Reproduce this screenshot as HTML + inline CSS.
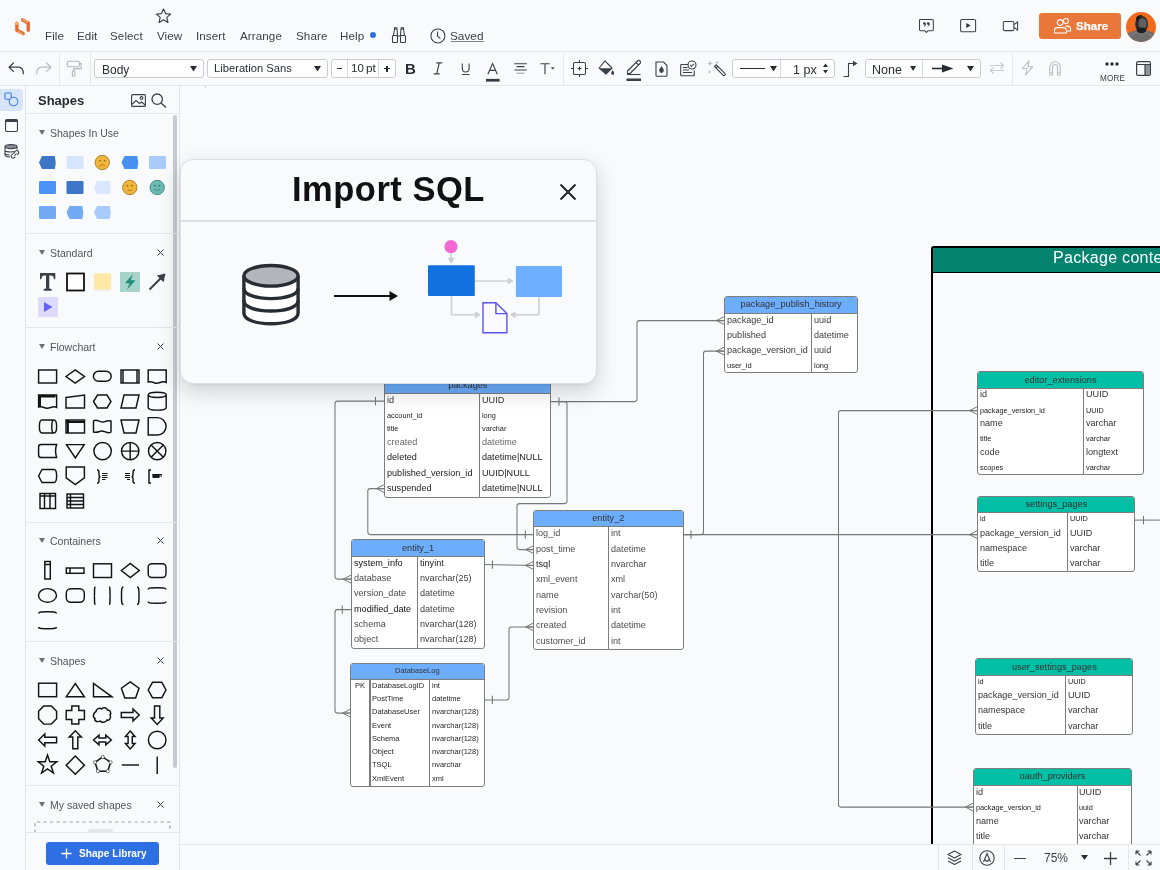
<!DOCTYPE html><html><head><meta charset="utf-8"><style>
*{box-sizing:border-box;margin:0;padding:0}
html,body{width:1160px;height:870px;overflow:hidden;background:#f9fafc;-webkit-font-smoothing:antialiased;font-family:"Liberation Sans",sans-serif;color:#282c33}
.abs{position:absolute}
.t{position:absolute;white-space:nowrap;line-height:1;will-change:transform}
svg{position:absolute;overflow:visible}
</style></head><body>

<div class="abs" style="left:0;top:0;width:1160px;height:51px;background:#f9fafc"></div>
<div class="abs" style="left:0;top:51px;width:1160px;height:1px;background:#e3e6ea"></div>
<div class="abs" style="left:0;top:85px;width:1160px;height:1px;background:#e3e6ea"></div>
<svg style="left:12px;top:16px" width="22" height="22" viewBox="0 0 22 22" fill="none" stroke-linecap="round" stroke-linejoin="round">
<path d="M4.9 7.3 V14.2 L11.2 17.6" stroke="#e4692a" stroke-width="3.4"/>
<path d="M4.9 7.2 V7.5" stroke="#f7b06a" stroke-width="3"/><path d="M6.5 15.6 L10.8 17.9" stroke="#f6a45c" stroke-width="1.6"/>
<path d="M10.6 3.9 L16.2 6.9 V14.2" stroke="#e4692a" stroke-width="3.4"/>
<path d="M10.9 3.6 L15.6 6.2" stroke="#f6a45c" stroke-width="1.6"/>
</svg>
<svg style="left:155px;top:8px" width="17" height="16" viewBox="0 0 17 16"><path d="M8.5 1 L10.6 5.6 L15.6 6.1 L11.8 9.4 L12.9 14.4 L8.5 11.8 L4.1 14.4 L5.2 9.4 L1.4 6.1 L6.4 5.6 Z" fill="none" stroke="#3b4048" stroke-width="1.2" stroke-linejoin="round"/></svg>
<div class="t" style="left:45.3px;top:29.7px;font-size:11.6px;letter-spacing:0.1px;color:#3a3f47">File</div>
<div class="t" style="left:76.8px;top:29.7px;font-size:11.6px;letter-spacing:0.1px;color:#3a3f47">Edit</div>
<div class="t" style="left:110.3px;top:29.7px;font-size:11.6px;letter-spacing:0.1px;color:#3a3f47">Select</div>
<div class="t" style="left:157.3px;top:29.7px;font-size:11.6px;letter-spacing:0.1px;color:#3a3f47">View</div>
<div class="t" style="left:196.3px;top:29.7px;font-size:11.6px;letter-spacing:0.1px;color:#3a3f47">Insert</div>
<div class="t" style="left:240.3px;top:29.7px;font-size:11.6px;letter-spacing:0.1px;color:#3a3f47">Arrange</div>
<div class="t" style="left:296.1px;top:29.7px;font-size:11.6px;letter-spacing:0.1px;color:#3a3f47">Share</div>
<div class="t" style="left:340.3px;top:29.7px;font-size:11.6px;letter-spacing:0.1px;color:#3a3f47">Help</div>
<div class="abs" style="left:370px;top:32px;width:6px;height:6px;border-radius:50%;background:#2f6fe4"></div>
<svg style="left:391px;top:27px" width="16" height="17" viewBox="0 0 16 17" fill="none" stroke="#3b4048" stroke-width="1.1">
<rect x="1.5" y="8.5" width="5" height="7" rx="0.8"/><rect x="9.5" y="8.5" width="5" height="7" rx="0.8"/>
<path d="M2.5 8.5 L3.5 2 L6 2 L6.5 8.5 M13.5 8.5 L12.5 2 L10 2 L9.5 8.5 M6.5 9 L9.5 9 M3.5 2 L3.5 0.8 L5.8 0.8 L5.8 2 M10.2 2 L10.2 0.8 L12.5 0.8 L12.5 2"/></svg>
<svg style="left:430px;top:28px" width="16" height="16" viewBox="0 0 16 16" fill="none" stroke="#3b4048" stroke-width="1.05"><circle cx="7.9" cy="7.9" r="7"/><path d="M7.6 3.6 L7.6 8.2 L10.4 10.6"/></svg>
<div class="t" style="left:450.3px;top:30.8px;font-size:11.8px;color:#3a3f47">Saved</div><div class="abs" style="left:450.8px;top:40.5px;width:33px;height:1px;background:#7d828a"></div>
<svg style="left:918px;top:18px" width="17" height="17" viewBox="0 0 17 17" fill="none" stroke="#3b4048" stroke-width="1.05">
<path d="M2.6 1.4 H14.2 A1.1 1.1 0 0 1 15.3 2.5 V11.6 A1.1 1.1 0 0 1 14.2 12.7 H10 L8.4 14.5 L6.8 12.7 H2.6 A1.1 1.1 0 0 1 1.5 11.6 V2.5 A1.1 1.1 0 0 1 2.6 1.4 Z" stroke-linejoin="round"/>
<g fill="#2a2e35" stroke="none"><circle cx="6.4" cy="5.6" r="1.25"/><circle cx="10.2" cy="5.6" r="1.25"/></g>
<path d="M7.5 5.8 C7.5 7.2 6.9 8 6 8.4 M11.3 5.8 C11.3 7.2 10.7 8 9.8 8.4" stroke="#2a2e35" stroke-width="1"/></svg>
<svg style="left:959px;top:18px" width="18" height="15" viewBox="0 0 18 15" fill="none" stroke="#3b4048" stroke-width="1.05">
<rect x="1.6" y="1.4" width="15" height="12.4" rx="1.4"/><path d="M7.3 5.1 L11.6 7.6 L7.3 10.1 Z" fill="#2a2e35" stroke="none"/></svg>
<svg style="left:1002px;top:20px" width="17" height="12" viewBox="0 0 17 12" fill="none" stroke="#3b4048" stroke-width="1.05">
<rect x="1.3" y="1.4" width="10.6" height="9.2" rx="1.3"/><path d="M11.9 4.6 L15.6 2 V10 L11.9 7.4"/></svg>
<div class="abs" style="left:1039px;top:13px;width:82px;height:26px;border-radius:3px;background:#e9773a"></div>
<svg style="left:1053px;top:17px" width="19" height="17" viewBox="0 0 19 17" fill="#e9773a" stroke="#fff" stroke-width="1.05">
<circle cx="12.9" cy="3.9" r="2.5"/><path d="M12.5 9.1 H14 C16.2 9.1 17.6 10.5 17.6 12.3 V14 H13.5"/>
<circle cx="7.2" cy="5.5" r="2.9"/><path d="M1.5 16 V13.3 C1.5 11.6 2.9 10.6 4.5 10.6 H10 C11.8 10.6 13.3 11.6 13.3 13.3 V16 Z"/></svg>
<div class="t" style="left:1075.5px;top:20.3px;font-size:11.6px;font-weight:bold;color:#fff;-webkit-text-stroke:0.25px #fff">Share</div>
<svg style="left:1126px;top:12px" width="30" height="30" viewBox="0 0 30 30">
<defs><clipPath id="avc"><circle cx="15" cy="15" r="15"/></clipPath></defs>
<g clip-path="url(#avc)"><rect width="30" height="30" fill="#f06b1c"/>
<path d="M0 23 C4 19.5 8 18.8 11 18 L19 18 C22 18.8 26 19.5 30 23 V30 H0 Z" fill="#6d6d6d"/>
<path d="M3 24 C6 22 9 21 12 20.5 M18 20.5 C21 21 24 22 27 24" stroke="#8a8a8a" stroke-width="0.8" fill="none"/>
<ellipse cx="15.6" cy="12.3" rx="6.4" ry="8.4" fill="#2a2a2a"/>
<ellipse cx="16.6" cy="11.6" rx="4.2" ry="5.6" fill="#8a8a8a" opacity="0.55"/>
<ellipse cx="15.4" cy="18.2" rx="4.6" ry="2.8" fill="#1e1e1e"/>
<path d="M10 6.5 C11 3.5 14.5 2.8 16.5 3.2 C13.5 4.2 11.8 6.2 11.2 9.5 Z" fill="#111"/>
</g></svg>
<svg style="left:8px;top:62px" width="17" height="13" viewBox="0 0 17 13" fill="none" stroke="#3b4048" stroke-width="1.2" stroke-linecap="round" stroke-linejoin="round">
<path d="M5.5 1 L1 5.2 L5.5 9.4 M1.2 5.2 H10.5 C13.5 5.2 15.3 7.5 15.3 11.8"/></svg>
<svg style="left:35px;top:62px" width="17" height="13" viewBox="0 0 17 13" fill="none" stroke="#b9bdc4" stroke-width="1.2" stroke-linecap="round" stroke-linejoin="round">
<path d="M11.5 1 L16 5.2 L11.5 9.4 M15.8 5.2 H6.5 C3.5 5.2 1.7 7.5 1.7 11.8"/></svg>
<div class="abs" style="left:59px;top:52px;width:1px;height:33px;background:#e6e8eb"></div>
<div class="abs" style="left:90px;top:52px;width:1px;height:33px;background:#e6e8eb"></div>
<svg style="left:66px;top:60px" width="17" height="17" viewBox="0 0 17 17" fill="none" stroke="#b3b7be" stroke-width="1.1">
<rect x="1.3" y="1.2" width="12.2" height="5.6" rx="1.6"/><path d="M13.5 3.6 H15.2 V8.6 H7.7 V10.6"/><rect x="6.4" y="10.6" width="2.6" height="5.6" rx="1.3"/></svg>
<div class="abs" style="left:94px;top:59px;width:110px;height:19px;border:1px solid #c9cdd3;border-radius:3px;background:#fff;"></div>
<div class="t" style="left:101.5px;top:63.6px;font-size:12px;color:#282c33">Body</div>
<svg style="left:190px;top:66px" width="7" height="5.5" viewBox="0 0 7 5.5"><path d="M0 0 H7 L3.5 5.5 Z" fill="#282c33"/></svg>
<div class="abs" style="left:207px;top:59px;width:121px;height:19px;border:1px solid #c9cdd3;border-radius:3px;background:#fff;"></div>
<div class="t" style="left:214px;top:62.8px;font-size:11.2px;color:#282c33">Liberation Sans</div>
<svg style="left:314px;top:66px" width="7" height="5.5" viewBox="0 0 7 5.5"><path d="M0 0 H7 L3.5 5.5 Z" fill="#282c33"/></svg>
<div class="abs" style="left:331px;top:59px;width:65px;height:19px;border:1px solid #c9cdd3;border-radius:3px;background:#fff;"></div>
<div class="abs" style="left:347px;top:60px;width:1px;height:17px;background:#d5d8dd"></div>
<div class="abs" style="left:377.8px;top:60px;width:1px;height:17px;background:#d5d8dd"></div>
<div class="abs" style="left:336.8px;top:68.2px;width:5.6px;height:1.3px;background:#282c33"></div>
<div class="t" style="left:350.5px;top:62.8px;font-size:11.5px;color:#282c33">10</div><div class="t" style="left:365.6px;top:62.8px;font-size:11.8px;color:#282c33">pt</div>
<div class="abs" style="left:384px;top:68.1px;width:6px;height:1.4px;background:#282c33"></div><div class="abs" style="left:386.3px;top:65.8px;width:1.4px;height:6px;background:#282c33"></div>
<div class="t" style="left:404.5px;top:61px;font-size:15px;font-weight:bold;color:#282c33">B</div>
<svg style="left:433px;top:62.2px" width="10" height="13" viewBox="0 0 10 13" fill="none" stroke="#3b4048" stroke-width="1.15"><path d="M3.3 0.8 H9.3 M0.7 11.8 H6.7 M6.3 0.8 L3.7 11.8"/></svg>
<svg style="left:461px;top:62.6px" width="10" height="13" viewBox="0 0 10 13" fill="none" stroke="#3b4048" stroke-width="1.1"><path d="M1.3 0.5 V5.6 C1.3 7.9 2.8 9 4.7 9 C6.6 9 8.1 7.9 8.1 5.6 V0.5 M0.9 11.5 H8.6"/></svg>
<svg style="left:486px;top:62.6px" width="15" height="19" viewBox="0 0 15 19"><path d="M1.9 11.2 L6.6 0.6 L11.3 11.2 M3.6 7.4 H9.6" fill="none" stroke="#3b4048" stroke-width="1.15"/><rect x="0" y="15.9" width="13.6" height="2.7" fill="#353a42"/></svg>
<svg style="left:514px;top:62.5px" width="14" height="12" viewBox="0 0 14 12" stroke="#3b4048" stroke-width="1.05"><path d="M0.3 0.7 H12.8 M2.6 3.6 H10.5 M0.3 6.9 H12.8"/><path d="M2.6 10.2 H10.5" stroke="#9a9ea5"/></svg>
<svg style="left:540px;top:62.5px" width="16" height="13" viewBox="0 0 16 13"><path d="M0.4 0.7 H9.6 M5 0.7 V11.3" fill="none" stroke="#3b4048" stroke-width="1.15"/><path d="M10.8 4.3 H14.6 L12.7 6.6 Z" fill="#3b4048"/></svg>
<div class="abs" style="left:563px;top:52px;width:1px;height:33px;background:#e6e8eb"></div>
<svg style="left:571px;top:60px" width="17" height="17" viewBox="0 0 17 17" fill="none" stroke="#3b4048" stroke-width="1.1">
<rect x="2.5" y="2.5" width="12" height="12" rx="1.2"/><path d="M8.5 0 V3 M8.5 14 V17 M0 8.5 H3 M14 8.5 H17 M8.5 6.5 V10.5 M6.5 8.5 H10.5"/></svg>
<svg style="left:598px;top:60px" width="17" height="21" viewBox="0 0 17 21">
<path d="M7 0.8 L9 3 L14 8 L8 14.2 L1.2 8 Z" fill="none" stroke="#3b4048" stroke-width="1.1" stroke-linejoin="round"/>
<path d="M1.5 8.2 H14 L8 14.2 Z" fill="#3b4048"/><path d="M14.6 10 C15.6 11.6 16.2 12.6 16.2 13.3 A1.5 1.5 0 0 1 13.2 13.3 C13.2 12.6 13.7 11.6 14.6 10Z" fill="#3b4048"/>
<rect x="0" y="18" width="15" height="3" fill="#ffffff"/></svg>
<svg style="left:626px;top:60px" width="16" height="22" viewBox="0 0 16 22" fill="none" stroke="#3b4048" stroke-width="1.1" stroke-linejoin="round">
<path d="M1.5 13.5 L1.5 11 L11.5 1 A1.6 1.6 0 0 1 14 3.5 L4 13.5 Z M10 2.5 L12.5 5"/><path d="M1 14.5 H14.5"/><rect x="0.5" y="18.5" width="14.5" height="2.5" fill="#3b4048" stroke="none"/></svg>
<svg style="left:655px;top:61px" width="13" height="16" viewBox="0 0 13 16" fill="none" stroke="#3b4048" stroke-width="1.1">
<path d="M1 1 H8.5 L12 4.5 V14.5 A0.8 0.8 0 0 1 11.2 15.2 H1.8 A0.8 0.8 0 0 1 1 14.5 Z"/><path d="M6.5 5 C7.8 7 8.8 8.3 8.8 9.6 A2.3 2.3 0 0 1 4.2 9.6 C4.2 8.3 5.2 7 6.5 5Z" fill="#3b4048" stroke="none"/></svg>
<svg style="left:680px;top:60px" width="17" height="17" viewBox="0 0 17 17" fill="none" stroke="#3b4048" stroke-width="1.1">
<path d="M8 4.5 H1.5 A0.8 0.8 0 0 0 0.7 5.3 V15 A0.8 0.8 0 0 0 1.5 15.8 H13.5 A0.8 0.8 0 0 0 14.3 15 V10.5"/><circle cx="12" cy="5" r="4"/><path d="M10.2 5 L11.5 6.3 L13.9 3.8"/><path d="M3 10 H9 M3 12.5 H12 M3 7.5 H7.5"/></svg>
<svg style="left:706px;top:60px" width="20" height="18" viewBox="0 0 20 18">
<path d="M8.5 6.5 L10.3 4.8 L18.8 13.3 A1.2 1.2 0 0 1 17 15.1 Z M10 8 L11.8 6.3" fill="none" stroke="#3b4048" stroke-width="1.1"/>
<path d="M4 0.5 L4.8 2.7 L7 3.5 L4.8 4.3 L4 6.5 L3.2 4.3 L1 3.5 L3.2 2.7Z" fill="#b9bdc4"/><path d="M11 0.5 L11.6 2 L13 2.5 L11.6 3 L11 4.5 L10.4 3 L9 2.5 L10.4 2Z" fill="#b9bdc4"/><path d="M3.5 10 L4.1 11.5 L5.5 12 L4.1 12.5 L3.5 14 L2.9 12.5 L1.5 12 L2.9 11.5Z" fill="#b9bdc4"/></svg>
<div class="abs" style="left:732px;top:59px;width:103px;height:19px;border:1px solid #c9cdd3;border-radius:3px;background:#fff;"></div>
<div class="abs" style="left:739.5px;top:68px;width:25px;height:1.2px;background:#282c33"></div>
<svg style="left:769.5px;top:66px" width="7" height="5.5" viewBox="0 0 7 5.5"><path d="M0 0 H7 L3.5 5.5 Z" fill="#282c33"/></svg>
<div class="abs" style="left:779.5px;top:60px;width:1px;height:17px;background:#d5d8dd"></div>
<div class="t" style="left:793px;top:63.6px;font-size:12.5px;color:#282c33">1 px</div>
<svg style="left:822.6px;top:63px" width="5" height="11" viewBox="0 0 5 11"><path d="M0 4 L2.5 0.6 L5 4Z M0 7 L2.5 10.4 L5 7Z" fill="#282c33"/></svg>
<svg style="left:843px;top:60px" width="15" height="18" viewBox="0 0 15 18" fill="none" stroke="#3b4048" stroke-width="1.1"><path d="M0.5 16.5 H5.5 V3.5 H10"/><path d="M10 0.8 L14.5 3.5 L10 6.2Z" fill="#3b4048" stroke="none"/></svg>
<div class="abs" style="left:865px;top:59px;width:116px;height:19px;border:1px solid #c9cdd3;border-radius:3px;background:#fff;"></div>
<div class="t" style="left:871.8px;top:63.6px;font-size:12.5px;color:#282c33">None</div>
<svg style="left:909.6px;top:66.2px" width="6.2" height="5" viewBox="0 0 6.2 5"><path d="M0 0 H6.2 L3.1 5 Z" fill="#282c33"/></svg>
<div class="abs" style="left:922px;top:60px;width:1px;height:17px;background:#d5d8dd"></div>
<svg style="left:932px;top:64px" width="22" height="9" viewBox="0 0 22 9"><path d="M0 4.5 H12" stroke="#282c33" stroke-width="1.6"/><path d="M10 0.5 L21.5 4.5 L10 8.5 Z" fill="#282c33"/></svg>
<svg style="left:966.5px;top:66px" width="7" height="5.5" viewBox="0 0 7 5.5"><path d="M0 0 H7 L3.5 5.5 Z" fill="#282c33"/></svg>
<svg style="left:989px;top:62px" width="16" height="12" viewBox="0 0 16 12" fill="none" stroke="#c5c9cf" stroke-width="1.1"><path d="M1 3.5 H14.5 M11.5 0.5 L14.5 3.5 L11.5 6.5 M15 8.5 H1.5 M4.5 5.5 L1.5 8.5 L4.5 11.5"/></svg>
<div class="abs" style="left:1012px;top:52px;width:1px;height:33px;background:#e6e8eb"></div>
<svg style="left:1021px;top:60px" width="13" height="16" viewBox="0 0 13 16" fill="none" stroke="#b9bdc4" stroke-width="1.1" stroke-linejoin="round"><path d="M8 0.8 L1.2 8.5 H6 L4.5 15.2 L11.8 6.8 H7 Z"/></svg>
<svg style="left:1049px;top:61px" width="12" height="15" viewBox="0 0 12 15" fill="none" stroke="#b9bdc4" stroke-width="1.1"><path d="M0.8 14 V6 A5.2 5.2 0 0 1 11.2 6 V14 H8.5 V6 A2.5 2.5 0 0 0 3.5 6 V14 Z M0.8 11.8 H3.5 M8.5 11.8 H11.2"/></svg>
<svg style="left:1105px;top:62px" width="14" height="4" viewBox="0 0 14 4"><circle cx="2" cy="2" r="1.7" fill="#282c33"/><circle cx="7" cy="2" r="1.7" fill="#282c33"/><circle cx="12" cy="2" r="1.7" fill="#282c33"/></svg>
<div class="t" style="left:1100px;top:74.5px;font-size:8.2px;color:#3a3f47;letter-spacing:0.15px">MORE</div>
<svg style="left:1136px;top:61px" width="15" height="15" viewBox="0 0 15 15"><rect x="0.6" y="0.6" width="13.8" height="13.8" rx="1.5" fill="none" stroke="#3b4048" stroke-width="1.2"/><rect x="9" y="3.5" width="5" height="10.5" fill="#8f949b"/><path d="M0.6 3.5 H14.4 M9 3.5 V14.4" stroke="#3b4048" stroke-width="1.2"/></svg>
<div class="abs" style="left:25px;top:86px;width:1px;height:784px;background:#e3e6ea"></div>
<div class="abs" style="left:0;top:88.5px;width:23px;height:22.5px;border-radius:0 4px 4px 0;background:#d7e5fb"></div>
<svg style="left:4px;top:92px" width="15" height="15" viewBox="0 0 15 15" fill="none" stroke="#3f7de6" stroke-width="1.1"><path d="M7.2 5.2 V1.8 A0.8 0.8 0 0 0 6.4 1 H1.8 A0.8 0.8 0 0 0 1 1.8 V6.4 A0.8 0.8 0 0 0 1.8 7.2 H5.2"/><circle cx="9.5" cy="9.5" r="4.3"/></svg>
<svg style="left:5px;top:119px" width="13" height="13" viewBox="0 0 13 13"><rect x="0.55" y="0.55" width="11.9" height="11.9" rx="1.2" fill="none" stroke="#3b4048" stroke-width="1.1"/><path d="M0.55 1.8 A1.2 1.2 0 0 1 1.75 0.55 H11.25 A1.2 1.2 0 0 1 12.45 1.8 V3 H0.55 Z" fill="#3b4048"/></svg>
<svg style="left:4px;top:144px" width="16" height="15" viewBox="0 0 16 15" fill="none" stroke="#3b4048" stroke-width="1.1">
<ellipse cx="7" cy="2.6" rx="6" ry="2" fill="#8e9299"/><path d="M1 2.6 V11 C1 12 3 12.8 6 13 M13 2.6 V5.5 M1 6 C1 7.1 3.7 8 7 8 C8.3 8 9.4 7.9 10.3 7.6 M1 9 C1 10 2.8 10.8 5.6 11"/>
<path d="M9.6 9.2 L11.6 7.2 A1.8 1.8 0 0 1 14.2 9.8 L13.2 10.8 M11.4 12.6 L10.4 13.6 A1.8 1.8 0 0 1 7.8 11 L9.8 9 M10.3 11.7 L12.5 9.5" stroke-width="1.05"/></svg>
<div class="abs" style="left:179px;top:86px;width:1px;height:784px;background:#e3e6ea"></div>
<div class="t" style="left:38px;top:93.5px;font-size:13px;font-weight:bold;color:#282c33">Shapes</div>
<svg style="left:131px;top:94px" width="15" height="13" viewBox="0 0 15 13" fill="none" stroke="#3b4048" stroke-width="1.1"><rect x="0.6" y="0.6" width="13.8" height="11.8" rx="1"/><path d="M0.8 10.5 L5 6.5 L8.5 9.5 L10.5 8 L14.2 11"/><circle cx="10.5" cy="4" r="1.4"/></svg>
<svg style="left:151px;top:93px" width="16" height="15" viewBox="0 0 16 15" fill="none" stroke="#3b4048" stroke-width="1.3"><circle cx="6.2" cy="6.2" r="5.2"/><path d="M10 10 L15 14.5"/></svg>
<div class="abs" style="left:26px;top:113px;width:153px;height:1px;background:#e3e6ea"></div>
<div class="abs" style="left:173px;top:115px;width:4px;height:653px;border-radius:2px;background:#c7cad0"></div>
<svg style="left:39px;top:130px" width="6" height="5" viewBox="0 0 6 5"><path d="M0 0 H6 L3 5Z" fill="#6b7079"/></svg>
<div class="t" style="left:50.3px;top:127.6px;font-size:10.5px;color:#50555d">Shapes In Use</div>
<div class="abs" style="left:26px;top:233px;width:153px;height:1px;background:#e3e6ea"></div>
<svg style="left:39px;top:250px" width="6" height="5" viewBox="0 0 6 5"><path d="M0 0 H6 L3 5Z" fill="#6b7079"/></svg>
<div class="t" style="left:50.3px;top:247.6px;font-size:10.5px;color:#50555d">Standard</div>
<svg style="left:157px;top:249px" width="7" height="7" viewBox="0 0 7 7" stroke="#3a3f47" stroke-width="1"><path d="M0.5 0.5 L6.5 6.5 M6.5 0.5 L0.5 6.5"/></svg>
<div class="abs" style="left:26px;top:327px;width:153px;height:1px;background:#e3e6ea"></div>
<svg style="left:39px;top:344px" width="6" height="5" viewBox="0 0 6 5"><path d="M0 0 H6 L3 5Z" fill="#6b7079"/></svg>
<div class="t" style="left:50.3px;top:341.6px;font-size:10.5px;color:#50555d">Flowchart</div>
<svg style="left:157px;top:343px" width="7" height="7" viewBox="0 0 7 7" stroke="#3a3f47" stroke-width="1"><path d="M0.5 0.5 L6.5 6.5 M6.5 0.5 L0.5 6.5"/></svg>
<div class="abs" style="left:26px;top:522px;width:153px;height:1px;background:#e3e6ea"></div>
<svg style="left:39px;top:538px" width="6" height="5" viewBox="0 0 6 5"><path d="M0 0 H6 L3 5Z" fill="#6b7079"/></svg>
<div class="t" style="left:50.3px;top:535.6px;font-size:10.5px;color:#50555d">Containers</div>
<svg style="left:157px;top:537px" width="7" height="7" viewBox="0 0 7 7" stroke="#3a3f47" stroke-width="1"><path d="M0.5 0.5 L6.5 6.5 M6.5 0.5 L0.5 6.5"/></svg>
<div class="abs" style="left:26px;top:641px;width:153px;height:1px;background:#e3e6ea"></div>
<svg style="left:39px;top:658px" width="6" height="5" viewBox="0 0 6 5"><path d="M0 0 H6 L3 5Z" fill="#6b7079"/></svg>
<div class="t" style="left:50.3px;top:655.6px;font-size:10.5px;color:#50555d">Shapes</div>
<svg style="left:157px;top:657px" width="7" height="7" viewBox="0 0 7 7" stroke="#3a3f47" stroke-width="1"><path d="M0.5 0.5 L6.5 6.5 M6.5 0.5 L0.5 6.5"/></svg>
<div class="abs" style="left:26px;top:785px;width:153px;height:1px;background:#e3e6ea"></div>
<svg style="left:39px;top:802px" width="6" height="5" viewBox="0 0 6 5"><path d="M0 0 H6 L3 5Z" fill="#6b7079"/></svg>
<div class="t" style="left:50.3px;top:799.6px;font-size:10.5px;color:#50555d">My saved shapes</div>
<svg style="left:157px;top:801px" width="7" height="7" viewBox="0 0 7 7" stroke="#3a3f47" stroke-width="1"><path d="M0.5 0.5 L6.5 6.5 M6.5 0.5 L0.5 6.5"/></svg>
<svg style="left:0;top:0" width="180" height="870" viewBox="0 0 180 870"><path d="M42 156 H54.8 Q56.6 162.5 54.8 169 H42 L39 162.5 Z" fill="#3d76c6"/><rect x="66.5" y="156" width="17" height="13" rx="1.2" fill="#d5e5fd"/><circle cx="102.3" cy="162.5" r="7.2" fill="#f2b53c" stroke="#9a6d14" stroke-width="0.8"/><circle cx="100.0" cy="160.7" r="0.9" fill="#9a6d14"/><circle cx="104.6" cy="160.7" r="0.9" fill="#9a6d14"/><path d="M99.3 166.1 Q102.3 163.1 105.3 166.1" fill="none" stroke="#9a6d14" stroke-width="0.7"/><path d="M124.5 156 H137.3 Q139.1 162.5 137.3 169 H124.5 L121.5 162.5 Z" fill="#4990f3"/><rect x="149" y="156" width="17" height="13" rx="1.2" fill="#a9cbfb"/><rect x="39" y="181" width="17" height="13" rx="1.2" fill="#4a92f5"/><rect x="66.5" y="181" width="17" height="13" rx="1.2" fill="#3d76c6"/><path d="M97 181 H109.8 Q111.6 187.5 109.8 194 H97 L94 187.5 Z" fill="#d9e8fd"/><circle cx="129.8" cy="187.5" r="7.2" fill="#f2b53c" stroke="#9a6d14" stroke-width="0.8"/><circle cx="127.50000000000001" cy="185.7" r="0.9" fill="#9a6d14"/><circle cx="132.10000000000002" cy="185.7" r="0.9" fill="#9a6d14"/><path d="M127.60000000000001 190.3 H132.0" stroke="#9a6d14" stroke-width="0.7"/><circle cx="157.2" cy="187.5" r="7.2" fill="#6dbab3" stroke="#2f7a73" stroke-width="0.8"/><circle cx="154.89999999999998" cy="185.7" r="0.9" fill="#2f7a73"/><circle cx="159.5" cy="185.7" r="0.9" fill="#2f7a73"/><path d="M154.2 189.1 Q157.2 192.1 160.2 189.1" fill="none" stroke="#2f7a73" stroke-width="0.7"/><rect x="39" y="206" width="17" height="13" rx="1.2" fill="#74a9f6"/><path d="M69.5 206 H82.3 Q84.1 212.5 82.3 219 H69.5 L66.5 212.5 Z" fill="#74a9f6"/><path d="M97 206 H109.8 Q111.6 212.5 109.8 219 H97 L94 212.5 Z" fill="#a9cbfb"/><path d="M40 273 H55.3 V279.2 H54 C53.6 276.6 52.8 275.6 50.8 275.6 H49.3 V288.4 L51.6 289 V290.8 H43.7 V289 L46 288.4 V275.6 H44.5 C42.5 275.6 41.7 276.6 41.3 279.2 H40 Z" fill="#3b4048"/><rect x="67" y="273.5" width="17" height="17" fill="#fff" stroke="#111" stroke-width="1.8"/><rect x="94" y="274" width="17" height="17" fill="#e6e6e6" opacity="0.5"/><rect x="94" y="273.3" width="17" height="16.2" fill="#fde8a6"/><rect x="120" y="272" width="20" height="20" fill="#a5d4cb"/><path d="M133 274 L125 283.3 H129.6 L127 289.8 L135.5 280.2 H130.8 Z" fill="#1f8b78"/><path d="M149.5 289.5 L161.5 277.5" stroke="#3b4048" stroke-width="1.9"/><path d="M165.5 273.5 L163.6 282.2 L156.8 275.4 Z" fill="#3b4048"/><rect x="38" y="297" width="20" height="20" fill="#dcdbfc"/><path d="M44 302 L52.5 307 L44 312 Z" fill="#6562ef"/><g fill="none" stroke="#111317" stroke-width="1.45"><rect x="38.6" y="370" width="18" height="13"/></g><g fill="none" stroke="#111317" stroke-width="1.45"><path d="M66 376.5 L75.2 370 L84.5 376.5 L75.2 383 Z"/></g><g fill="none" stroke="#111317" stroke-width="1.45"><rect x="93.4" y="371.3" width="17.8" height="10" rx="5"/></g><g fill="none" stroke="#111317" stroke-width="1.45"><rect x="121" y="370" width="18" height="13"/><path d="M123 370 V383 M137 370 V383"/></g><g fill="none" stroke="#111317" stroke-width="1.45"><path d="M148.2 370 H166.2 V382.5 C162 380 159 384.5 155 383 C152 382 150 381.5 148.2 382 Z"/></g><g fill="none" stroke="#111317" stroke-width="1.45"><path d="M38.6 395 H56.6 V407.5 C52.5 405 49.5 409.5 45.5 408 C42.5 407 40.5 406.5 38.6 407 Z"/><path d="M38.6 396.2 H55.5 M39.8 395 V406.6" stroke-width="2.4"/></g><g fill="none" stroke="#111317" stroke-width="1.45"><path d="M66 397.5 L84.5 395 V408 H66 Z"/></g><g fill="none" stroke="#111317" stroke-width="1.45"><path d="M93.5 401.5 L97.5 395 H107 L111 401.5 L107 408 H97.5 Z"/></g><g fill="none" stroke="#111317" stroke-width="1.45"><path d="M124 395 H139 L136 408 H121 Z"/></g><g fill="none" stroke="#111317" stroke-width="1.45"><path d="M148.2 394.8 V407.5 C148.2 411 166.2 411 166.2 407.5 V394.8 C166.2 391.3 148.2 391.3 148.2 394.8 C148.2 398.3 166.2 398.3 166.2 394.8"/></g><g fill="none" stroke="#111317" stroke-width="1.45"><path d="M42 420 H54 C57.5 420 57.5 433 54 433 H42 C38.5 433 38.5 420 42 420 Z M54 420 C51 420 51 433 54 433"/></g><g fill="none" stroke="#111317" stroke-width="1.45"><rect x="66" y="420" width="18.5" height="13"/><path d="M66 421.8 H84.5 M67.8 420 V433" stroke-width="2.2"/></g><g fill="none" stroke="#111317" stroke-width="1.45"><path d="M93.5 421 C97 418 101 424 105 421.5 C107.5 420.5 109.5 420.5 111 421 V432 C107.5 435 103.5 429 99.5 431.5 C97 432.5 95 432.5 93.5 432 Z"/></g><g fill="none" stroke="#111317" stroke-width="1.45"><path d="M121 420 H139 L136 433 H124 Z"/></g><g fill="none" stroke="#111317" stroke-width="1.45"><path d="M148.2 417.6 H157.4 A8.7 8.7 0 0 1 157.4 435 H148.2 Z"/></g><g fill="none" stroke="#111317" stroke-width="1.45"><path d="M41 444.5 H56.6 C55.5 448 55.5 454 56.6 457.5 H41 C39.5 457.5 38.6 456.5 38.6 455 V447 C38.6 445.5 39.5 444.5 41 444.5 Z"/></g><g fill="none" stroke="#111317" stroke-width="1.45"><path d="M66.5 444.6 H84.2 L75.35 458 Z"/></g><g fill="none" stroke="#111317" stroke-width="1.45"><circle cx="102.6" cy="451.1" r="8.7"/></g><g fill="none" stroke="#111317" stroke-width="1.45"><circle cx="130.2" cy="451.1" r="8.7"/><path d="M130.2 442.4 V459.8 M121.5 451.1 H138.9"/></g><g fill="none" stroke="#111317" stroke-width="1.45"><circle cx="157.2" cy="451.1" r="8.7"/><path d="M151.05 444.95 L163.35 457.25 M163.35 444.95 L151.05 457.25"/></g><g fill="none" stroke="#111317" stroke-width="1.45"><path d="M42 469.5 H54 C57.5 469.5 57.5 482.5 54 482.5 H42 L38.6 476 Z"/></g><g fill="none" stroke="#111317" stroke-width="1.45"><path d="M66.2 467 H84.4 V477.8 L75.3 484.6 L66.2 477.8 Z"/></g><g fill="none" stroke="#111317" stroke-width="1.45"><path d="M97 470 C99 470 99 471 99 475 C99 476.5 99.5 476.8 100.5 476.8 C99.5 476.8 99 477.2 99 478.5 C99 482.5 99 483.2 97 483.2"/><path d="M102 473.5 H107.5 M102 475.5 H107.5 M102 477.5 H107.5 M102 479.5 H105.5" stroke-width="1"/></g><g fill="none" stroke="#111317" stroke-width="1.45"><path d="M125 473.5 H130 M125 475.5 H130 M125 477.5 H130 M127 479.5 H130" stroke-width="1"/><path d="M135 470 C133 470 133 471 133 475 C133 476.5 132.5 476.8 131.5 476.8 C132.5 476.8 133 477.2 133 478.5 C133 482.5 133 483.2 135 483.2"/></g><g fill="none" stroke="#111317" stroke-width="1.45"><path d="M151 470 H149 V483 H151"/><rect x="152.5" y="474" width="7" height="4" fill="#1f2329" stroke="none"/><path d="M152.5 474.5 H162 M152.5 476 H162" stroke-width="1"/></g><g fill="none" stroke="#111317" stroke-width="1.45"><rect x="40" y="493.5" width="15.5" height="15"/><path d="M40 496 H55.5 M44.5 493.5 V508.5 M50 493.5 V508.5"/></g><g fill="none" stroke="#111317" stroke-width="1.45"><rect x="67" y="494" width="16.5" height="14"/><path d="M67 497.5 H83.5 M67 501 H83.5 M67 504.5 H83.5 M70.5 494 V508"/></g><g fill="none" stroke="#111317" stroke-width="1.45"><rect x="44.8" y="561.5" width="5.5" height="17.5"/><path d="M44.8 564.5 H50.3"/></g><g fill="none" stroke="#111317" stroke-width="1.45"><rect x="66.3" y="568" width="17.7" height="5.3"/><path d="M70 568 V573.3"/></g><g fill="none" stroke="#111317" stroke-width="1.45"><rect x="93.5" y="563.8" width="18" height="13.7"/></g><g fill="none" stroke="#111317" stroke-width="1.45"><path d="M121.3 570.5 L130.3 563.5 L139.3 570.5 L130.3 577.5 Z"/></g><g fill="none" stroke="#111317" stroke-width="1.45"><rect x="148.2" y="563.7" width="17.8" height="13.8" rx="3.5"/></g><g fill="none" stroke="#111317" stroke-width="1.45"><ellipse cx="47.5" cy="595.4" rx="9" ry="6.8"/></g><g fill="none" stroke="#111317" stroke-width="1.45"><rect x="66.3" y="588.8" width="18" height="13.5" rx="4.5"/></g><g fill="none" stroke="#111317" stroke-width="1.45"><path d="M95.5 587 C94.5 587 94.5 588 94.5 595 C94.5 596 94 596 93.8 596 C94.2 596 94.5 596.5 94.5 597 C94.5 604 94.5 604.5 95.5 604.5 M109 587 C110 587 110 588 110 595 C110 596 110.5 596 110.8 596 C110.4 596 110 596.5 110 597 C110 604 110 604.5 109 604.5"/></g><g fill="none" stroke="#111317" stroke-width="1.45"><path d="M123.5 587 C121.8 587 121.5 588 121.5 595.5 C121.5 603.5 121.8 604.5 123.5 604.5 M137 587 C138.7 587 139 588 139 595.5 C139 603.5 138.7 604.5 137 604.5"/></g><g fill="none" stroke="#111317" stroke-width="1.45"><path d="M148.2 589.5 C148.2 588 149 587.8 157 587.8 C165 587.8 165.8 588 165.8 589.5 M148.2 601.5 C148.2 603 149 603.2 157 603.2 C165 603.2 165.8 603 165.8 601.5"/></g><g fill="none" stroke="#111317" stroke-width="1.45"><path d="M38.6 613.5 C38.6 612 39.5 611.8 47.5 611.8 C55.5 611.8 56.4 612 56.4 613.5 M38.6 627 C38.6 628.5 39.5 628.7 47.5 628.7 C55.5 628.7 56.4 628.5 56.4 627"/></g><g fill="none" stroke="#111317" stroke-width="1.45"><rect x="38.6" y="683.2" width="18" height="13.5"/></g><g fill="none" stroke="#111317" stroke-width="1.45"><path d="M66.2 696.8 L75.3 683.5 L84.4 696.8 Z"/></g><g fill="none" stroke="#111317" stroke-width="1.45"><path d="M93.5 683.5 V696.8 H112 Z"/></g><g fill="none" stroke="#111317" stroke-width="1.45"><path d="M130.2 681.8 L139 688.2 L135.6 698 H124.8 L121.4 688.2 Z"/></g><g fill="none" stroke="#111317" stroke-width="1.45"><path d="M148.2 690 L152.5 682.3 H161.8 L166 690 L161.8 697.7 H152.5 Z"/></g><g fill="none" stroke="#111317" stroke-width="1.45"><path d="M43.8 706 H51.3 L56.6 711.3 V718.8 L51.3 724.1 H43.8 L38.6 718.8 V711.3 Z"/></g><g fill="none" stroke="#111317" stroke-width="1.45"><path d="M71.8 706 H78.8 V710.5 H84.4 V719.5 H78.8 V724 H71.8 V719.5 H66.2 V710.5 H71.8 Z"/></g><g fill="none" stroke="#111317" stroke-width="1.45"><path d="M96 711.5 C96 708.5 100 707.5 101.5 709 C103 707 107 707.5 107.5 710 C110.5 710 111.5 713 110 715 C111.5 717.5 109.5 721 107 720 C106 722.5 101.5 723 100 721 C97.5 722.5 94 721 95 718.5 C92.5 717.5 93 713 96 711.5 Z"/></g><g fill="none" stroke="#111317" stroke-width="1.45"><path d="M121.3 712.5 H133 V709 L139.2 715 L133 721 V717.5 H121.3 Z"/></g><g fill="none" stroke="#111317" stroke-width="1.45"><path d="M154.5 706 H159.8 V718 H163.2 L157.2 724.5 L151.2 718 H154.5 Z"/></g><g fill="none" stroke="#111317" stroke-width="1.45"><path d="M56.6 737.3 H44.8 V734 L38.6 740 L44.8 746 V742.7 H56.6 Z"/></g><g fill="none" stroke="#111317" stroke-width="1.45"><path d="M72.8 748.8 V737 H69.2 L75.3 730.8 L81.4 737 H77.8 V748.8 Z"/></g><g fill="none" stroke="#111317" stroke-width="1.45"><path d="M93.5 740 L99 735.2 V738 H105.8 V735.2 L111.3 740 L105.8 744.8 V742 H99 V744.8 Z"/></g><g fill="none" stroke="#111317" stroke-width="1.45"><path d="M130.2 731 L135 736.5 H132.3 V743.5 H135 L130.2 749 L125.4 743.5 H128.1 V736.5 H125.4 Z"/></g><g fill="none" stroke="#111317" stroke-width="1.45"><circle cx="157.2" cy="740" r="8.8"/></g><g fill="none" stroke="#111317" stroke-width="1.45"><path d="M47.5 755 L49.8 761.8 L56.8 761.8 L51.2 766.2 L53.4 773 L47.5 768.8 L41.6 773 L43.8 766.2 L38.2 761.8 L45.2 761.8 Z"/></g><g fill="none" stroke="#111317" stroke-width="1.45"><path d="M75.3 756 L84.4 765.2 L75.3 774.3 L66.2 765.2 Z"/></g><path d="M102.8 757 L110.6 762.3 L107.7 771.2 H97.9 L95 762.3 Z" fill="none" stroke="#111317" stroke-width="1.5"/><circle cx="102.8" cy="757" r="1.6" fill="#fff" stroke="#1f2329" stroke-width="0.6"/><circle cx="110.6" cy="762.3" r="1.6" fill="#fff" stroke="#1f2329" stroke-width="0.6"/><circle cx="107.7" cy="771.2" r="1.6" fill="#fff" stroke="#1f2329" stroke-width="0.6"/><circle cx="97.9" cy="771.2" r="1.6" fill="#fff" stroke="#1f2329" stroke-width="0.6"/><circle cx="95" cy="762.3" r="1.6" fill="#fff" stroke="#1f2329" stroke-width="0.6"/><g fill="none" stroke="#111317" stroke-width="1.45"><path d="M121.8 765 H139"/></g><g fill="none" stroke="#111317" stroke-width="1.45"><path d="M157.2 756.5 V774"/></g></svg>
<svg style="left:34px;top:821px" width="137" height="12" viewBox="0 0 137 12"><path d="M1 12 V1 H136 V12" fill="none" stroke="#9ca1a8" stroke-width="1.2" stroke-dasharray="3.3 3.2"/></svg>
<div class="abs" style="left:88px;top:829px;width:25px;height:6px;border-radius:3px;background:#e3e5e9"></div>
<div class="abs" style="left:26px;top:832px;width:153px;height:38px;background:#f9fafc;border-top:1px solid #e3e6ea"></div>
<div class="abs" style="left:46px;top:842px;width:112.5px;height:23px;border-radius:3px;background:#2f6fe4"></div>
<svg style="left:61px;top:848px" width="11" height="11" viewBox="0 0 11 11" stroke="#fff" stroke-width="1.3"><path d="M5.5 0.5 V10.5 M0.5 5.5 H10.5"/></svg>
<div class="t" style="left:78.5px;top:849.2px;font-size:10.15px;font-weight:bold;color:#fff">Shape Library</div>
<div class="abs" style="left:931px;top:246.3px;width:240px;height:640px;border:2px solid #000;border-radius:3px;background:transparent"></div>
<div class="abs" style="left:933px;top:248.3px;width:230px;height:25px;background:#04836f;border-bottom:1.8px solid #000;border-top-left-radius:1px"></div>
<div class="t" style="left:1052.5px;top:250.2px;font-size:16px;letter-spacing:0.3px;color:#fff">Package content</div>
<svg style="left:0;top:0" width="1160" height="870" viewBox="0 0 1160 870"><path d="M384.3 401.1 L337.50 401.10 Q335 401.1 335.00 403.60 L335.00 576.60 Q335 579.1 337.50 579.10 L351 579.1" fill="none" stroke="#777777" stroke-width="1.05"/><path d="M375.5 396.90000000000003 V405.3" stroke="#777777" stroke-width="1.1"/><path d="M343.1 579.1 L351.1 575.1 M343.1 579.1 L351.1 583.1 M343.1 579.1 L351.1 579.1" fill="none" stroke="#777777" stroke-width="1"/><path d="M384.3 488.6 L370.30 488.60 Q367.8 488.6 367.80 491.10 L367.80 532.10 Q367.8 534.6 370.30 534.60 L533.8 534.6" fill="none" stroke="#777777" stroke-width="1.05"/><path d="M376.3 488.6 L384.3 484.6 M376.3 488.6 L384.3 492.6 M376.3 488.6 L384.3 488.6" fill="none" stroke="#777777" stroke-width="1"/><path d="M525.3 530.4 V538.8000000000001" stroke="#777777" stroke-width="1.1"/><path d="M550.7 401.6 L634.50 401.60 Q637 401.6 637.00 399.10 L637.00 323.10 Q637 320.6 639.50 320.60 L724.4 320.6" fill="none" stroke="#777777" stroke-width="1.05"/><path d="M559 397.40000000000003 V405.8" stroke="#777777" stroke-width="1.1"/><path d="M716.4 320.6 L724.4 316.6 M716.4 320.6 L724.4 324.6 M716.4 320.6 L724.4 320.6" fill="none" stroke="#777777" stroke-width="1"/><path d="M560 401.6 L564.50 401.60 Q567 401.6 567.00 404.10 L567.00 501.10 Q567 503.6 564.50 503.60 L519.50 503.60 Q517 503.6 517.00 506.10 L517.00 547.10 Q517 549.6 519.50 549.60 L533.8 549.6" fill="none" stroke="#777777" stroke-width="1.05"/><path d="M525.8 549.6 L533.8 545.6 M525.8 549.6 L533.8 553.6 M525.8 549.6 L533.8 549.6" fill="none" stroke="#777777" stroke-width="1"/><path d="M724.4 351.1 L706.00 351.10 Q703.5 351.1 703.50 353.60 L703.50 532.10 Q703.5 534.6 701.00 534.60 L683.3 534.6" fill="none" stroke="#777777" stroke-width="1.05"/><path d="M716.4 351.1 L724.4 347.1 M716.4 351.1 L724.4 355.1 M716.4 351.1 L724.4 351.1" fill="none" stroke="#777777" stroke-width="1"/><path d="M691 530.4 V538.8000000000001" stroke="#777777" stroke-width="1.1"/><path d="M683.3 534.6 L977.4 534.6" fill="none" stroke="#777777" stroke-width="1.05"/><path d="M969.4 534.6 L977.4 530.6 M969.4 534.6 L977.4 538.6 M969.4 534.6 L977.4 534.6" fill="none" stroke="#777777" stroke-width="1"/><path d="M977.5 410.6 L841.00 410.60 Q838.5 410.6 838.50 413.10 L838.50 804.60 Q838.5 807.1 841.00 807.10 L973.4 807.1" fill="none" stroke="#777777" stroke-width="1.05"/><path d="M969.5 410.6 L977.5 406.6 M969.5 410.6 L977.5 414.6 M969.5 410.6 L977.5 410.6" fill="none" stroke="#777777" stroke-width="1"/><path d="M965.4 807.1 L973.4 803.1 M965.4 807.1 L973.4 811.1 M965.4 807.1 L973.4 807.1" fill="none" stroke="#777777" stroke-width="1"/><path d="M1134.9 520.1 L1160 520.1" fill="none" stroke="#777777" stroke-width="1.05"/><path d="M1143.5 515.9 V524.3000000000001" stroke="#777777" stroke-width="1.1"/><path d="M484 564.4 L533.8 565.4" fill="none" stroke="#777777" stroke-width="1.05"/><path d="M492.4 560.4 V568.8000000000001" stroke="#777777" stroke-width="1.1"/><path d="M525.5 565.4 L533.5 561.4 M525.5 565.4 L533.5 569.4 M525.5 565.4 L533.5 565.4" fill="none" stroke="#777777" stroke-width="1"/><path d="M351.1 609.6 L337.50 609.60 Q335 609.6 335.00 612.10 L335.00 710.60 Q335 713.1 337.50 713.10 L350.7 713.1" fill="none" stroke="#777777" stroke-width="1.05"/><path d="M342.3 605.4 V613.8000000000001" stroke="#777777" stroke-width="1.1"/><path d="M342.7 713.1 L350.7 709.1 M342.7 713.1 L350.7 717.1 M342.7 713.1 L350.7 713.1" fill="none" stroke="#777777" stroke-width="1"/><path d="M484.1 699.9 L506.50 699.90 Q509 699.9 509.00 697.40 L509.00 629.40 Q509 626.9 511.50 626.90 L533.8 626.9" fill="none" stroke="#777777" stroke-width="1.05"/><path d="M492.3 695.6999999999999 V704.1" stroke="#777777" stroke-width="1.1"/><path d="M525.8 626.9 L533.8 622.9 M525.8 626.9 L533.8 630.9 M525.8 626.9 L533.8 626.9" fill="none" stroke="#777777" stroke-width="1"/></svg>
<div class="abs" style="left:383.7px;top:376.9px;width:167.60000000000002px;height:121.2px;border:1.2px solid #7d7d7d;border-radius:3px;background:#fff;overflow:hidden"><div class="abs" style="left:0;top:0;width:100%;height:16.5px;background:#6cadfc;border-bottom:1.2px solid #7d7d7d"></div><div class="t" style="left:0;width:100%;text-align:center;top:3.418px;font-size:9.2px;color:#333">packages</div><div class="abs" style="left:94.6px;top:16.5px;width:1.1px;height:105.5px;background:#7d7d7d"></div><div class="t" style="left:2.0px;top:18.214px;font-size:9.1px;color:#333">id</div><div class="t" style="left:97.19999999999999px;top:18.214px;font-size:9.1px;color:#333">UUID</div><div class="t" style="left:2.0px;top:34.442px;font-size:7.3px;color:#1a1a1a">account_id</div><div class="t" style="left:97.19999999999999px;top:34.442px;font-size:7.3px;color:#1a1a1a">long</div><div class="t" style="left:2.0px;top:47.442px;font-size:7.3px;color:#1a1a1a">title</div><div class="t" style="left:97.19999999999999px;top:47.442px;font-size:7.3px;color:#1a1a1a">varchar</div><div class="t" style="left:2.0px;top:59.714px;font-size:9.1px;color:#666">created</div><div class="t" style="left:97.19999999999999px;top:59.714px;font-size:9.1px;color:#666">datetime</div><div class="t" style="left:2.0px;top:74.714px;font-size:9.1px;color:#1a1a1a">deleted</div><div class="t" style="left:97.19999999999999px;top:74.714px;font-size:9.1px;color:#1a1a1a">datetime|NULL</div><div class="t" style="left:2.0px;top:90.714px;font-size:9.1px;color:#1a1a1a">published_version_id</div><div class="t" style="left:97.19999999999999px;top:90.714px;font-size:9.1px;color:#1a1a1a">UUID|NULL</div><div class="t" style="left:2.0px;top:105.714px;font-size:9.1px;color:#1a1a1a">suspended</div><div class="t" style="left:97.19999999999999px;top:105.714px;font-size:9.1px;color:#1a1a1a">datetime|NULL</div></div><div class="abs" style="left:723.8px;top:295.79999999999995px;width:134.3px;height:77.10000000000004px;border:1.2px solid #7d7d7d;border-radius:3px;background:#fff;overflow:hidden"><div class="abs" style="left:0;top:0;width:100%;height:16.900000000000034px;background:#6cadfc;border-bottom:1.2px solid #7d7d7d"></div><div class="t" style="left:0;width:100%;text-align:center;top:3.618000000000017px;font-size:9.2px;color:#333">package_publish_history</div><div class="abs" style="left:86.60000000000005px;top:16.900000000000034px;width:1.1px;height:61.0px;background:#7d7d7d"></div><div class="t" style="left:2.0px;top:18.81400000000002px;font-size:9.1px;color:#3a3a3a">package_id</div><div class="t" style="left:89.20000000000005px;top:18.81400000000002px;font-size:9.1px;color:#3a3a3a">uuid</div><div class="t" style="left:2.0px;top:33.81400000000002px;font-size:9.1px;color:#3a3a3a">published</div><div class="t" style="left:89.20000000000005px;top:33.81400000000002px;font-size:9.1px;color:#3a3a3a">datetime</div><div class="t" style="left:2.0px;top:49.31400000000002px;font-size:9.1px;color:#3a3a3a">package_version_id</div><div class="t" style="left:89.20000000000005px;top:49.31400000000002px;font-size:9.1px;color:#3a3a3a">uuid</div><div class="t" style="left:2.0px;top:65.05000000000003px;font-size:7.5px;color:#1a1a1a">user_id</div><div class="t" style="left:89.20000000000005px;top:65.05000000000003px;font-size:7.5px;color:#1a1a1a">long</div></div><div class="abs" style="left:350.5px;top:539.1999999999999px;width:134.09999999999997px;height:110.1000000000001px;border:1.2px solid #7d7d7d;border-radius:3px;background:#fff;overflow:hidden"><div class="abs" style="left:0;top:0;width:100%;height:16.800000000000068px;background:#6cadfc;border-bottom:1.2px solid #7d7d7d"></div><div class="t" style="left:0;width:100%;text-align:center;top:3.5680000000000343px;font-size:9.2px;color:#333">entity_1</div><div class="abs" style="left:65.69999999999996px;top:16.800000000000068px;width:1.1px;height:94.10000000000002px;background:#7d7d7d"></div><div class="t" style="left:2.0px;top:18.414000000000044px;font-size:9.1px;color:#111">system_info</div><div class="t" style="left:68.29999999999995px;top:18.414000000000044px;font-size:9.1px;color:#222">tinyint</div><div class="t" style="left:2.0px;top:33.414000000000044px;font-size:9.1px;color:#4a4a4a">database</div><div class="t" style="left:68.29999999999995px;top:33.414000000000044px;font-size:9.1px;color:#3f3f3f">nvarchar(25)</div><div class="t" style="left:2.0px;top:49.01400000000007px;font-size:9.1px;color:#4a4a4a">version_date</div><div class="t" style="left:68.29999999999995px;top:49.01400000000007px;font-size:9.1px;color:#3f3f3f">datetime</div><div class="t" style="left:2.0px;top:64.41400000000004px;font-size:9.1px;color:#111">modified_date</div><div class="t" style="left:68.29999999999995px;top:64.41400000000004px;font-size:9.1px;color:#3f3f3f">datetime</div><div class="t" style="left:2.0px;top:79.41400000000004px;font-size:9.1px;color:#4a4a4a">schema</div><div class="t" style="left:68.29999999999995px;top:79.41400000000004px;font-size:9.1px;color:#3f3f3f">nvarchar(128)</div><div class="t" style="left:2.0px;top:94.91400000000004px;font-size:9.1px;color:#4a4a4a">object</div><div class="t" style="left:68.29999999999995px;top:94.91400000000004px;font-size:9.1px;color:#3f3f3f">nvarchar(128)</div></div><div class="abs" style="left:533.1999999999999px;top:509.7px;width:150.7px;height:140.60000000000002px;border:1.2px solid #7d7d7d;border-radius:3px;background:#fff;overflow:hidden"><div class="abs" style="left:0;top:0;width:100%;height:16.400000000000034px;background:#6cadfc;border-bottom:1.2px solid #7d7d7d"></div><div class="t" style="left:0;width:100%;text-align:center;top:3.368000000000017px;font-size:9.2px;color:#333">entity_2</div><div class="abs" style="left:74.10000000000005px;top:16.400000000000034px;width:1.1px;height:125.0px;background:#7d7d7d"></div><div class="t" style="left:2.0px;top:17.913999999999987px;font-size:9.1px;color:#4d4d4d">log_id</div><div class="t" style="left:76.70000000000005px;top:17.913999999999987px;font-size:9.1px;color:#4d4d4d">int</div><div class="t" style="left:2.0px;top:33.91399999999999px;font-size:9.1px;color:#4d4d4d">post_time</div><div class="t" style="left:76.70000000000005px;top:33.91399999999999px;font-size:9.1px;color:#4d4d4d">datetime</div><div class="t" style="left:2.0px;top:48.91399999999999px;font-size:9.1px;color:#1a1a1a">tsql</div><div class="t" style="left:76.70000000000005px;top:48.91399999999999px;font-size:9.1px;color:#444">nvarchar</div><div class="t" style="left:2.0px;top:63.913999999999994px;font-size:9.1px;color:#4d4d4d">xml_event</div><div class="t" style="left:76.70000000000005px;top:63.913999999999994px;font-size:9.1px;color:#4d4d4d">xml</div><div class="t" style="left:2.0px;top:79.91399999999999px;font-size:9.1px;color:#4d4d4d">name</div><div class="t" style="left:76.70000000000005px;top:79.91399999999999px;font-size:9.1px;color:#4d4d4d">varchar(50)</div><div class="t" style="left:2.0px;top:94.91399999999999px;font-size:9.1px;color:#4d4d4d">revision</div><div class="t" style="left:76.70000000000005px;top:94.91399999999999px;font-size:9.1px;color:#4d4d4d">int</div><div class="t" style="left:2.0px;top:109.91399999999999px;font-size:9.1px;color:#4d4d4d">created</div><div class="t" style="left:76.70000000000005px;top:109.91399999999999px;font-size:9.1px;color:#4d4d4d">datetime</div><div class="t" style="left:2.0px;top:125.91399999999999px;font-size:9.1px;color:#4d4d4d">customer_id</div><div class="t" style="left:76.70000000000005px;top:125.91399999999999px;font-size:9.1px;color:#4d4d4d">int</div></div><div class="abs" style="left:350.09999999999997px;top:662.6999999999999px;width:134.60000000000002px;height:123.90000000000005px;border:1.2px solid #7d7d7d;border-radius:3px;background:#fff;overflow:hidden"><div class="abs" style="left:0;top:0;width:100%;height:16.5px;background:#6cadfc;border-bottom:1.2px solid #7d7d7d"></div><div class="t" style="left:0;width:100%;text-align:center;top:3.3000000000000003px;font-size:7.5px;color:#333">DatabaseLog</div><div class="abs" style="left:18.4px;top:16.5px;width:1.1px;height:108.20000000000005px;background:#7d7d7d"></div><div class="abs" style="left:78.20000000000002px;top:16.5px;width:1.1px;height:108.20000000000005px;background:#7d7d7d"></div><div class="t" style="left:2.0px;top:18.150000000000045px;font-size:7.5px;color:#1f1f1f">&nbsp;PK</div><div class="t" style="left:21.0px;top:18.150000000000045px;font-size:7.5px;color:#1f1f1f">DatabaseLogID</div><div class="t" style="left:80.80000000000001px;top:18.150000000000045px;font-size:7.5px;color:#1f1f1f">int</div><div class="t" style="left:21.0px;top:31.420000000000027px;font-size:7.5px;color:#1f1f1f">PostTime</div><div class="t" style="left:80.80000000000001px;top:31.420000000000027px;font-size:7.5px;color:#1f1f1f">datetime</div><div class="t" style="left:21.0px;top:44.690000000000005px;font-size:7.5px;color:#1f1f1f">DatabaseUser</div><div class="t" style="left:80.80000000000001px;top:44.690000000000005px;font-size:7.5px;color:#1f1f1f">nvarchar(128)</div><div class="t" style="left:21.0px;top:57.95999999999999px;font-size:7.5px;color:#1f1f1f">Event</div><div class="t" style="left:80.80000000000001px;top:57.95999999999999px;font-size:7.5px;color:#1f1f1f">nvarchar(128)</div><div class="t" style="left:21.0px;top:71.23000000000009px;font-size:7.5px;color:#1f1f1f">Schema</div><div class="t" style="left:80.80000000000001px;top:71.23000000000009px;font-size:7.5px;color:#1f1f1f">nvarchar(128)</div><div class="t" style="left:21.0px;top:84.50000000000007px;font-size:7.5px;color:#1f1f1f">Object</div><div class="t" style="left:80.80000000000001px;top:84.50000000000007px;font-size:7.5px;color:#1f1f1f">nvarchar(128)</div><div class="t" style="left:21.0px;top:97.77000000000005px;font-size:7.5px;color:#1f1f1f">TSQL</div><div class="t" style="left:80.80000000000001px;top:97.77000000000005px;font-size:7.5px;color:#1f1f1f">nvarchar</div><div class="t" style="left:21.0px;top:111.04000000000003px;font-size:7.5px;color:#1f1f1f">XmlEvent</div><div class="t" style="left:80.80000000000001px;top:111.04000000000003px;font-size:7.5px;color:#1f1f1f">xml</div></div><div class="abs" style="left:976.9px;top:371.09999999999997px;width:166.99999999999994px;height:103.80000000000003px;border:1.2px solid #7d7d7d;border-radius:3px;background:#fff;overflow:hidden"><div class="abs" style="left:0;top:0;width:100%;height:16.600000000000023px;background:#03bfa5;border-bottom:1.2px solid #7d7d7d"></div><div class="t" style="left:0;width:100%;text-align:center;top:3.4680000000000115px;font-size:9.2px;color:#333">editor_extensions</div><div class="abs" style="left:105.10000000000005px;top:16.600000000000023px;width:1.1px;height:88.0px;background:#7d7d7d"></div><div class="t" style="left:2.0px;top:18.214px;font-size:9.1px;color:#333">id</div><div class="t" style="left:107.70000000000005px;top:18.214px;font-size:9.1px;color:#333">UUID</div><div class="t" style="left:2.0px;top:34.64199999999999px;font-size:7.3px;color:#1a1a1a">package_version_id</div><div class="t" style="left:107.70000000000005px;top:34.64199999999999px;font-size:7.3px;color:#1a1a1a">UUID</div><div class="t" style="left:2.0px;top:46.91399999999999px;font-size:9.1px;color:#333">name</div><div class="t" style="left:107.70000000000005px;top:46.91399999999999px;font-size:9.1px;color:#333">varchar</div><div class="t" style="left:2.0px;top:63.04200000000003px;font-size:7.3px;color:#1a1a1a">title</div><div class="t" style="left:107.70000000000005px;top:63.04200000000003px;font-size:7.3px;color:#1a1a1a">varchar</div><div class="t" style="left:2.0px;top:75.51400000000001px;font-size:9.1px;color:#333">code</div><div class="t" style="left:107.70000000000005px;top:75.51400000000001px;font-size:9.1px;color:#333">longtext</div><div class="t" style="left:2.0px;top:91.74200000000002px;font-size:7.3px;color:#1a1a1a">scopes</div><div class="t" style="left:107.70000000000005px;top:91.74200000000002px;font-size:7.3px;color:#1a1a1a">varchar</div></div><div class="abs" style="left:976.8px;top:495.79999999999995px;width:158.7000000000001px;height:76.59999999999998px;border:1.2px solid #7d7d7d;border-radius:3px;background:#fff;overflow:hidden"><div class="abs" style="left:0;top:0;width:100%;height:16.5px;background:#03bfa5;border-bottom:1.2px solid #7d7d7d"></div><div class="t" style="left:0;width:100%;text-align:center;top:3.418px;font-size:9.2px;color:#333">settings_pages</div><div class="abs" style="left:89.29999999999998px;top:16.5px;width:1.1px;height:60.89999999999998px;background:#7d7d7d"></div><div class="t" style="left:2.0px;top:18.54200000000002px;font-size:7.3px;color:#1a1a1a">id</div><div class="t" style="left:91.89999999999998px;top:18.54200000000002px;font-size:7.3px;color:#1a1a1a">UUID</div><div class="t" style="left:2.0px;top:31.81400000000002px;font-size:9.1px;color:#333">package_version_id</div><div class="t" style="left:91.89999999999998px;top:31.81400000000002px;font-size:9.1px;color:#333">UUID</div><div class="t" style="left:2.0px;top:46.81400000000002px;font-size:9.1px;color:#333">namespace</div><div class="t" style="left:91.89999999999998px;top:46.81400000000002px;font-size:9.1px;color:#333">varchar</div><div class="t" style="left:2.0px;top:61.81400000000003px;font-size:9.1px;color:#333">title</div><div class="t" style="left:91.89999999999998px;top:61.81400000000003px;font-size:9.1px;color:#333">varchar</div></div><div class="abs" style="left:974.6999999999999px;top:658.1px;width:158.7px;height:77.09999999999998px;border:1.2px solid #7d7d7d;border-radius:3px;background:#fff;overflow:hidden"><div class="abs" style="left:0;top:0;width:100%;height:17.09999999999991px;background:#03bfa5;border-bottom:1.2px solid #7d7d7d"></div><div class="t" style="left:0;width:100%;text-align:center;top:3.7179999999999547px;font-size:9.2px;color:#333">user_settings_pages</div><div class="abs" style="left:89.60000000000005px;top:17.09999999999991px;width:1.1px;height:60.80000000000007px;background:#7d7d7d"></div><div class="t" style="left:2.0px;top:19.24199999999995px;font-size:7.3px;color:#1a1a1a">id</div><div class="t" style="left:92.20000000000005px;top:19.24199999999995px;font-size:7.3px;color:#1a1a1a">UUID</div><div class="t" style="left:2.0px;top:31.513999999999953px;font-size:9.1px;color:#333">package_version_id</div><div class="t" style="left:92.20000000000005px;top:31.513999999999953px;font-size:9.1px;color:#333">UUID</div><div class="t" style="left:2.0px;top:47.01399999999995px;font-size:9.1px;color:#333">namespace</div><div class="t" style="left:92.20000000000005px;top:47.01399999999995px;font-size:9.1px;color:#333">varchar</div><div class="t" style="left:2.0px;top:62.51399999999996px;font-size:9.1px;color:#333">title</div><div class="t" style="left:92.20000000000005px;top:62.51399999999996px;font-size:9.1px;color:#333">varchar</div></div><div class="abs" style="left:972.8px;top:768.0px;width:159.00000000000006px;height:92.59999999999998px;border:1.2px solid #7d7d7d;border-radius:3px;background:#fff;overflow:hidden"><div class="abs" style="left:0;top:0;width:100%;height:16.5px;background:#03bfa5;border-bottom:1.2px solid #7d7d7d"></div><div class="t" style="left:0;width:100%;text-align:center;top:3.418px;font-size:9.2px;color:#333">oauth_providers</div><div class="abs" style="left:103.00000000000003px;top:16.5px;width:1.1px;height:76.89999999999998px;background:#7d7d7d"></div><div class="t" style="left:2.0px;top:18.613999999999976px;font-size:9.1px;color:#333">id</div><div class="t" style="left:105.60000000000002px;top:18.613999999999976px;font-size:9.1px;color:#333">UUID</div><div class="t" style="left:2.0px;top:35.14199999999993px;font-size:7.3px;color:#1a1a1a">package_version_id</div><div class="t" style="left:105.60000000000002px;top:35.14199999999993px;font-size:7.3px;color:#1a1a1a">uuid</div><div class="t" style="left:2.0px;top:47.613999999999976px;font-size:9.1px;color:#333">name</div><div class="t" style="left:105.60000000000002px;top:47.613999999999976px;font-size:9.1px;color:#333">varchar</div><div class="t" style="left:2.0px;top:63.01399999999996px;font-size:9.1px;color:#333">title</div><div class="t" style="left:105.60000000000002px;top:63.01399999999996px;font-size:9.1px;color:#333">varchar</div></div>
<div class="abs" style="left:179.5px;top:158.5px;width:417px;height:225.3px;border-radius:13px;background:#f9fafc;border:1px solid #dcdfe4;box-shadow:0 8px 22px rgba(0,0,0,0.17),0 1px 3px rgba(0,0,0,0.05)"></div>
<div class="abs" style="left:180.5px;top:220px;width:415px;height:1.5px;background:#dde0e5"></div>
<div class="t" style="left:291.5px;top:171.8px;font-size:34.5px;font-weight:bold;letter-spacing:0.5px;color:#111">Import SQL</div>
<svg style="left:559px;top:183px" width="18" height="18" viewBox="0 0 18 18" stroke="#1f2329" stroke-width="2"><path d="M1.5 1.5 L16.5 16.5 M16.5 1.5 L1.5 16.5"/></svg>
<svg style="left:230px;top:230px" width="360" height="120" viewBox="230 230 360 120">
<path d="M243.9 276 V313 C243.9 320 256.5 323.7 271 323.7 C285.5 323.7 298.1 320 298.1 313 V276" fill="#fff" stroke="#282c33" stroke-width="3.4"/>
<path d="M243.9 288.2 C243.9 295 256.5 298.6 271 298.6 C285.5 298.6 298.1 295 298.1 288.2 M243.9 300.6 C243.9 307.4 256.5 311 271 311 C285.5 311 298.1 307.4 298.1 300.6" fill="none" stroke="#282c33" stroke-width="3.4"/>
<ellipse cx="271" cy="275.8" rx="27.1" ry="10.3" fill="#b2b5b9" stroke="#282c33" stroke-width="3.4"/>
<path d="M334 296 H391" stroke="#111" stroke-width="2"/><path d="M389.5 291 L398 296 L389.5 301 Z" fill="#111"/>
<circle cx="451" cy="246.6" r="6.6" fill="#f466d3"/>
<path d="M451.2 253 V260 M475 281 H509 M451.5 296 V314.8 H476 M538.9 297 V314.8 H514.5" fill="none" stroke="#cdd1d6" stroke-width="1.6"/><path d="M448.4 258.2 L451.2 263.2 L454 258.2 Z M508.3 278.2 L513 281 L508.3 283.8 Z M475.3 312 L480 314.8 L475.3 317.6 Z M515.2 312 L510.5 314.8 L515.2 317.6 Z" fill="#cdd1d6" stroke="#cdd1d6" stroke-width="1" stroke-linejoin="round"/>
<rect x="428" y="265.2" width="46.8" height="30.7" rx="1" fill="#1271e0"/>
<rect x="515.9" y="266.1" width="46.1" height="30.8" rx="1" fill="#6eb0fd"/>
<path d="M483 302.7 H495.9 L506.9 313.6 V332.7 H483 Z" fill="#f9f9fe" stroke="#5a53ee" stroke-width="1.4"/>
<path d="M495.9 302.7 V313.6 H506.9" fill="none" stroke="#5a53ee" stroke-width="1.4"/>
</svg>
<div class="abs" style="left:205px;top:86px;width:955px;height:1.2px;background:#ffffff"></div><div class="abs" style="left:205px;top:86px;width:1px;height:2px;background:#cfd3d8"></div>
<div class="abs" style="left:180px;top:844px;width:980px;height:1px;background:#e3e6ea"></div>
<div class="abs" style="left:180px;top:845px;width:980px;height:25px;background:#f9fafc"></div>
<div class="abs" style="left:938px;top:844px;width:1px;height:26px;background:#e3e6ea"></div>
<div class="abs" style="left:972px;top:844px;width:1px;height:26px;background:#e3e6ea"></div>
<div class="abs" style="left:1004px;top:844px;width:1px;height:26px;background:#e3e6ea"></div>
<div class="abs" style="left:1127.5px;top:844px;width:1px;height:26px;background:#e3e6ea"></div>
<svg style="left:947px;top:850px" width="15" height="16" viewBox="0 0 15 16" fill="none" stroke="#3b4048" stroke-width="1.1" stroke-linejoin="round"><path d="M7.5 1 L14 4.5 L7.5 8 L1 4.5 Z M1 7.8 L7.5 11.3 L14 7.8 M1 11 L7.5 14.5 L14 11"/></svg>
<svg style="left:979px;top:850px" width="16" height="16" viewBox="0 0 16 16" fill="none" stroke="#3b4048" stroke-width="1.1"><circle cx="8" cy="8" r="7.2"/><path d="M4.5 12 L8 3.5 L11.5 12 M5.8 9.5 L8 11.5 L10.2 9.5"/></svg>
<div class="abs" style="left:1014px;top:857.5px;width:12px;height:1.3px;background:#3b4048"></div>
<div class="t" style="left:1044px;top:852px;font-size:12px;color:#3a3f47">75%</div>
<svg style="left:1081px;top:855px" width="7" height="5" viewBox="0 0 7 5"><path d="M0 0 H7 L3.5 5Z" fill="#282c33"/></svg>
<svg style="left:1104px;top:851.5px" width="13" height="13" viewBox="0 0 13 13" stroke="#3b4048" stroke-width="1.3"><path d="M6.5 0 V13 M0 6.5 H13"/></svg>
<svg style="left:1135px;top:850px" width="17" height="16" viewBox="0 0 17 16" fill="none" stroke="#3b4048" stroke-width="1.1"><path d="M1 1 L5.5 5.5 M1 1 H4.5 M1 1 V4.5 M16 1 L11.5 5.5 M16 1 H12.5 M16 1 V4.5 M1 15 L5.5 10.5 M1 15 H4.5 M1 15 V11.5 M16 15 L11.5 10.5 M16 15 H12.5 M16 15 V11.5"/></svg>
</body></html>
